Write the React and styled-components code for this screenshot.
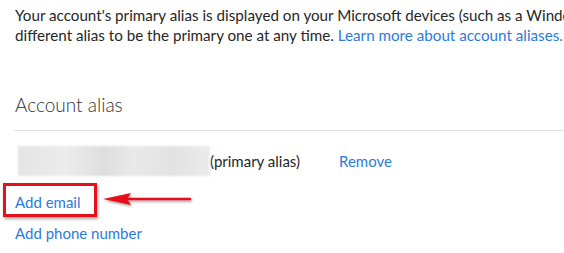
import React from "react";
import styled, { createGlobalStyle } from "styled-components";

const GlobalStyle = createGlobalStyle`
  html, body {
    margin: 0;
    padding: 0;
    background: #fff;
    overflow: hidden;
  }
  body {
    font-family: Lato, "Noto Sans", sans-serif;
    color: #262626;
  }
`;

const Page = styled.div`
  width: 564px;
  height: 253px;
  padding: 5px 0 0 15px;
  box-sizing: border-box;
  overflow: hidden;
`;

const Intro = styled.p`
  margin: 0;
  font-size: 15.2px;
  line-height: 20px;
  white-space: nowrap;
`;

const Link = styled.a`
  color: #2b7bd9;
  text-decoration: none;
  cursor: pointer;
`;

const Heading = styled.h2`
  margin: 47px 0 0 0;
  font-size: 19px;
  font-weight: 300;
  line-height: 26px;
  color: #333;
`;

const Divider = styled.hr`
  margin: 12px 0 0 -1px;
  border: none;
  border-top: 1px solid #e1e1e1;
`;

const AliasRow = styled.div`
  display: flex;
  align-items: center;
  height: 30px;
  margin-top: 15px;
  font-size: 15px;
`;

const Blurred = styled.div`
  width: 192px;
  height: 30px;
  margin-left: 3px;
  background: linear-gradient(
    90deg,
    #e4e4e4 0%,
    #ececec 25%,
    #dedede 45%,
    #e9e9e9 60%,
    #e2e2e2 80%,
    #ebebeb 100%
  );
  filter: blur(1px);
`;

const Muted = styled.span``;

const RemoveLink = styled(Link)`
  margin-left: 39px;
`;

const ActionList = styled.div`
  display: flex;
  flex-direction: column;
  gap: 11px;
  margin-top: 16px;
  font-size: 15px;
  line-height: 20px;
`;

const Highlight = styled.div`
  position: relative;
  align-self: flex-start;
`;

const RedBox = styled.div`
  position: absolute;
  left: -12px;
  top: -9px;
  width: 94px;
  height: 34px;
  border: 3px solid #e8101a;
  box-sizing: border-box;
  box-shadow: 1px 2px 3px rgba(0, 0, 0, 0.35);
`;

const Arrow = styled.svg`
  position: absolute;
  left: 86px;
  top: -1px;
  overflow: visible;
`;

function App() {
  return (
    <>
      <GlobalStyle />
      <Page>
        <Intro>
          Your account's primary alias is displayed on your Microsoft devices
          (such as a Windows 10 PC, Xbox, or Windows Phone). You can choose a
          <br />
          different alias to be the primary one at any time.{" "}
          <Link>Learn more about account aliases.</Link>
        </Intro>
        <Heading>Account alias</Heading>
        <Divider />
        <AliasRow>
          <Blurred />
          <Muted>(primary alias)</Muted>
          <RemoveLink>Remove</RemoveLink>
        </AliasRow>
        <ActionList>
          <Highlight>
            <Link>Add email</Link>
            <RedBox />
            <Arrow width="92" height="18" viewBox="0 0 92 18">
              <defs>
                <filter id="sh" x="-10%" y="-50%" width="130%" height="200%">
                  <feDropShadow dx="1" dy="1.5" stdDeviation="1" floodOpacity="0.4" />
                </filter>
              </defs>
              <g filter="url(#sh)">
                <line x1="24" y1="8" x2="89" y2="8" stroke="#e8101a" strokeWidth="2.5" strokeLinecap="round" />
                <polygon points="2,8 30,2 26,8 30,14" fill="#e8101a" />
              </g>
            </Arrow>
          </Highlight>
          <Link>Add phone number</Link>
        </ActionList>
      </Page>
    </>
  );
}

export default App;
